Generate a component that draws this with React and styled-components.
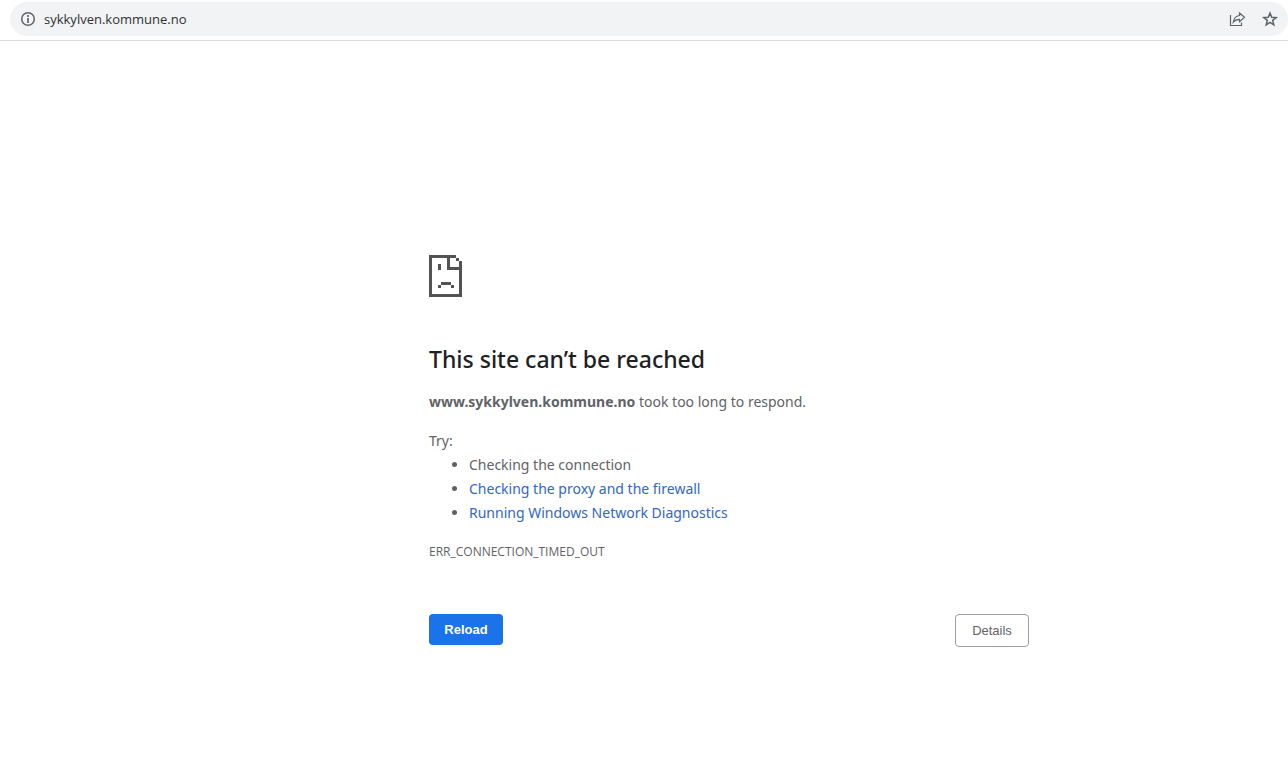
import React from 'react';
import styled, { createGlobalStyle } from 'styled-components';

const GlobalStyle = createGlobalStyle`
  * { box-sizing: border-box; }
  body {
    margin: 0;
    background: #fff;
    color: #5f6368;
    font-family: "Noto Sans", "Open Sans", sans-serif;
  }
`;

const Toolbar = styled.header`
  padding: 2px 0 4px 10px;
  border-bottom: 1px solid #dadce0;
`;

const Omnibox = styled.div`
  display: flex;
  align-items: center;
  height: 34px;
  padding: 0 9px;
  border-radius: 17px;
  background: #f1f3f4;
`;

const IconButton = styled.button`
  display: flex;
  flex: none;
  padding: 0;
  margin-left: ${({ $gap }) => $gap || 0}px;
  border: 0;
  background: none;
  color: #5f6368;
`;

const Address = styled.input`
  flex: 1;
  min-width: 0;
  margin-left: 7px;
  padding: 0;
  border: 0;
  outline: 0;
  background: none;
  color: #303236;
  font-family: "Open Sans", "Noto Sans", sans-serif;
  font-size: 13px;
  line-height: 20px;
`;

const Page = styled.main`
  display: grid;
  grid-template-columns: 429fr minmax(0, 600px) 259fr;
  padding: 214px 0 40px;
`;

const Content = styled.div`
  grid-column: 2;
  font-size: 14px;
  line-height: 24px;
`;

const SadPage = styled.svg`
  display: block;
  width: 33px;
  height: 42px;
  fill: #535353;
`;

const Title = styled.h1`
  margin: 46px 0 15px;
  color: #202124;
  font-size: 23px;
  font-weight: 500;
  line-height: 32px;
`;

const Message = styled.p`
  margin: 0 0 15px;
`;

const Tips = styled.ul`
  margin: 0;
  padding-left: 40px;
`;

const TipLink = styled.a`
  color: #3367c0;
  text-decoration: none;
`;

const ErrorCode = styled.p`
  margin: 15px 0 50px;
  font-family: "Open Sans", "Noto Sans", sans-serif;
  font-size: 12px;
`;

const Actions = styled.div`
  display: flex;
  justify-content: space-between;
  align-items: flex-start;
`;

const Button = styled.button`
  width: 74px;
  height: ${({ $primary }) => ($primary ? 31 : 33)}px;
  padding: 0;
  border: ${({ $primary }) => ($primary ? '0' : '1px solid #9aa0a6')};
  border-radius: 4px;
  background: ${({ $primary }) => ($primary ? '#1a73e8' : '#fff')};
  color: ${({ $primary }) => ($primary ? '#fff' : '#5f6368')};
  font: ${({ $primary }) => ($primary ? 700 : 400)} 13px "Liberation Sans", Arial, sans-serif;
`;

export default function App() {
  return (
    <>
      <GlobalStyle />
      <Toolbar>
        <Omnibox>
          <IconButton aria-label="View site information">
            <svg width="18" height="18" viewBox="0 0 18 18" fill="none" stroke="currentColor">
              <circle cx="9" cy="9" r="6.3" strokeWidth="1.5" />
              <path d="M9 5v2M9 8v5" strokeWidth="1.7" />
            </svg>
          </IconButton>
          <Address aria-label="Address" defaultValue="sykkylven.kommune.no" spellCheck={false} />
          <IconButton aria-label="Share this page">
            <svg width="18" height="18" viewBox="0 0 18 18" fill="none" stroke="currentColor" strokeWidth="1.2">
              <path d="M2.500 5v10.500h11v-3" />
              <path d="M11.500 3l5 4.300-5 4.300V9.300C8.500 9.300 6.800 10.200 5.300 12.200 5.700 8.800 7.700 6 11.500 5.500z" />
            </svg>
          </IconButton>
          <IconButton aria-label="Bookmark this page" $gap={15}>
            <svg width="18" height="18" viewBox="0 0 18 18" fill="none" stroke="currentColor" strokeWidth="1.5">
              <path d="M9 3l1.700 4.200 4.500.3-3.500 2.900 1.100 4.400L9 12.400l-3.800 2.400 1.100-4.400L2.800 7.500l4.500-.3z" />
            </svg>
          </IconButton>
        </Omnibox>
      </Toolbar>
      <Page>
        <Content>
          <SadPage viewBox="0 0 33 42" shapeRendering="crispEdges" aria-hidden="true">
            <path d="M0 0h27v3h-6v9h12v3H18V3H3v36h27V15h3v27H0z" />
            <path d="M27 3h3v3h-3zM30 6h3v9h-3zM9 9h3v6H9zM12 27h10v3H12zM9 30h3v3H9zM22 30h3v3h-3z" />
          </SadPage>
          <Title>This site can’t be reached</Title>
          <Message>
            <strong>www.sykkylven.kommune.no</strong> took too long to respond.
          </Message>
          <div>Try:</div>
          <Tips>
            <li>Checking the connection</li>
            <li><TipLink href="#proxy">Checking the proxy and the firewall</TipLink></li>
            <li><TipLink href="#diagnostics">Running Windows Network Diagnostics</TipLink></li>
          </Tips>
          <ErrorCode>ERR_CONNECTION_TIMED_OUT</ErrorCode>
          <Actions>
            <Button $primary>Reload</Button>
            <Button>Details</Button>
          </Actions>
        </Content>
      </Page>
    </>
  );
}
